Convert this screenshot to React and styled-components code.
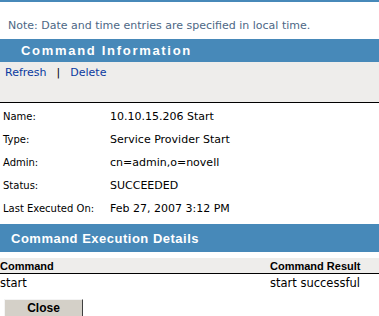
import React from "react";
import styled, { createGlobalStyle } from "styled-components";

const Global = createGlobalStyle`
  html, body { margin: 0; padding: 0; background: #fff; }
  body { font-family: "DejaVu Sans", Verdana, sans-serif; width: 379px; overflow: hidden; }
`;

const BLUE = "#4789b9";

const Page = styled.div`
  display: flex;
  flex-direction: column;
  width: 379px;
  border-top: 2px solid ${BLUE};
`;

const Note = styled.div`
  height: 37px;
  box-sizing: border-box;
  padding: 17px 0 0 8px;
  font-size: 11px;
  color: #4d6785;
`;

const SectionHeader = styled.div`
  height: ${(p) => p.$h}px;
  box-sizing: border-box;
  background: ${BLUE};
  color: #fff;
  display: flex;
  align-items: center;
  padding-left: ${(p) => p.$indent}px;
  font-family: "Liberation Sans", Arial, sans-serif;
  font-size: ${(p) => p.$fs}px;
  font-weight: bold;
  letter-spacing: ${(p) => p.$ls}px;
`;

const Toolbar = styled.div`
  height: 41px;
  box-sizing: border-box;
  background: #eeedeb;
  border-bottom: 1px solid #000;
  padding: 4px 0 0 5px;
  display: flex;
  align-items: flex-start;
  gap: 10px;
  font-size: 11px;
`;

const Link = styled.a`
  color: #0a3aa0;
  text-decoration: none;
  cursor: pointer;
`;

const Sep = styled.span`
  color: #000;
`;

const Details = styled.div`
  display: flex;
  flex-direction: column;
  padding: 2px 0 4px 0;
`;

const Row = styled.div`
  display: grid;
  grid-template-columns: 110px 1fr;
  height: 23px;
  align-items: center;
`;

const Label = styled.span`
  padding-left: 3px;
  font-size: 10px;
  color: #000;
`;

const Value = styled.span`
  font-size: 11px;
  color: #000;
`;

const Table = styled.div`
  display: flex;
  flex-direction: column;
  margin-top: 6px;
`;

const TableRow = styled.div`
  display: grid;
  grid-template-columns: 270px 1fr;
  align-items: center;
  height: ${(p) => p.$h}px;
  box-sizing: border-box;
  font-family: ${(p) => (p.$head ? '"Liberation Sans", Arial, sans-serif' : '"DejaVu Sans", Verdana, sans-serif')};
  font-size: ${(p) => (p.$head ? "11px" : "11.5px")};
  font-weight: ${(p) => (p.$head ? "bold" : "normal")};
  background: ${(p) => (p.$head ? "#eeedeb" : "transparent")};
  border-bottom: ${(p) => (p.$head ? "1px solid #000" : "none")};
`;

const Actions = styled.div`
  padding: 5px 0 0 4px;
`;

const Button = styled.button`
  width: 79px;
  height: 19px;
  box-sizing: border-box;
  background: #d4d0c8;
  border: 1px solid;
  border-color: #f4f4f4 #404040 #404040 #f4f4f4;
  font-family: "Liberation Sans", Arial, sans-serif;
  font-size: 12px;
  font-weight: bold;
  color: #000;
  padding: 0;
`;

const rows = [
  ["Name:", "10.10.15.206 Start"],
  ["Type:", "Service Provider Start"],
  ["Admin:", "cn=admin,o=novell"],
  ["Status:", "SUCCEEDED"],
  ["Last Executed On:", "Feb 27, 2007 3:12 PM"],
];

export default function App() {
  return (
    <>
      <Global />
      <Page>
        <Note>Note: Date and time entries are specified in local time.</Note>
        <SectionHeader $h={23} $indent={21} $fs={13} $ls={1.7}>
          Command Information
        </SectionHeader>
        <Toolbar>
          <Link>Refresh</Link>
          <Sep>|</Sep>
          <Link>Delete</Link>
        </Toolbar>
        <Details>
          {rows.map(([l, v]) => (
            <Row key={l}>
              <Label>{l}</Label>
              <Value>{v}</Value>
            </Row>
          ))}
        </Details>
        <SectionHeader $h={28} $indent={11} $fs={13} $ls={0.5}>
          Command Execution Details
        </SectionHeader>
        <Table>
          <TableRow $head $h={16}>
            <span>Command</span>
            <span>Command Result</span>
          </TableRow>
          <TableRow $h={18}>
            <span>start</span>
            <span>start successful</span>
          </TableRow>
        </Table>
        <Actions>
          <Button>Close</Button>
        </Actions>
      </Page>
    </>
  );
}
